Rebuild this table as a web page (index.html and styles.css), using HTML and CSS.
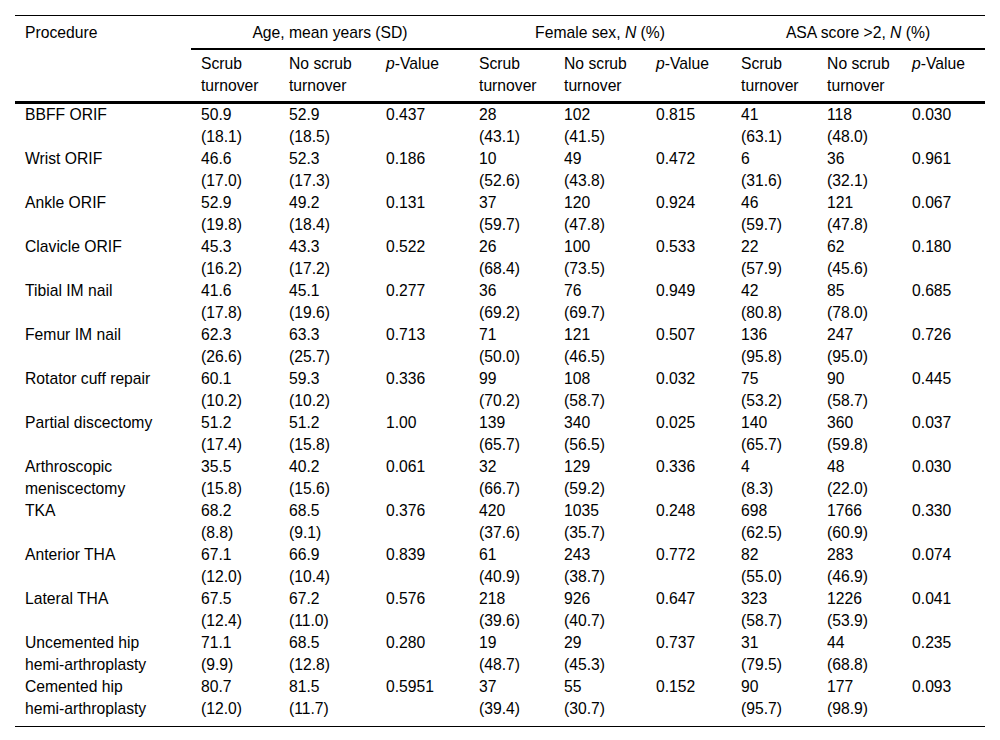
FILE: index.html
```html
<!DOCTYPE html>
<html lang="en">
<head>
<meta charset="utf-8">
<title>Table</title>
<link rel="stylesheet" href="styles.css">
</head>
<body>
<table class="data">
  <colgroup>
    <col class="c-proc">
    <col class="c1"><col class="c2"><col class="c3">
    <col class="c4"><col class="c5"><col class="c6">
    <col class="c7"><col class="c8"><col class="c9">
  </colgroup>
  <thead>
    <tr class="hr1">
      <th rowspan="2" class="proc">Procedure</th>
      <th colspan="3" class="grp">Age, mean years (SD)</th>
      <th colspan="3" class="grp">Female sex, <i>N</i> (%)</th>
      <th colspan="3" class="grp">ASA score &gt;2, <i>N</i> (%)</th>
    </tr>
    <tr class="hr2">
      <th>Scrub turnover</th><th>No scrub turnover</th><th><i>p</i>-Value</th>
      <th>Scrub turnover</th><th>No scrub turnover</th><th><i>p</i>-Value</th>
      <th>Scrub turnover</th><th>No scrub turnover</th><th><i>p</i>-Value</th>
    </tr>
  </thead>
  <tbody>
    <tr><td>BBFF ORIF</td><td>50.9<br>(18.1)</td><td>52.9<br>(18.5)</td><td>0.437</td><td>28<br>(43.1)</td><td>102<br>(41.5)</td><td>0.815</td><td>41<br>(63.1)</td><td>118<br>(48.0)</td><td>0.030</td></tr>
    <tr><td>Wrist ORIF</td><td>46.6<br>(17.0)</td><td>52.3<br>(17.3)</td><td>0.186</td><td>10<br>(52.6)</td><td>49<br>(43.8)</td><td>0.472</td><td>6<br>(31.6)</td><td>36<br>(32.1)</td><td>0.961</td></tr>
    <tr><td>Ankle ORIF</td><td>52.9<br>(19.8)</td><td>49.2<br>(18.4)</td><td>0.131</td><td>37<br>(59.7)</td><td>120<br>(47.8)</td><td>0.924</td><td>46<br>(59.7)</td><td>121<br>(47.8)</td><td>0.067</td></tr>
    <tr><td>Clavicle ORIF</td><td>45.3<br>(16.2)</td><td>43.3<br>(17.2)</td><td>0.522</td><td>26<br>(68.4)</td><td>100<br>(73.5)</td><td>0.533</td><td>22<br>(57.9)</td><td>62<br>(45.6)</td><td>0.180</td></tr>
    <tr><td>Tibial IM nail</td><td>41.6<br>(17.8)</td><td>45.1<br>(19.6)</td><td>0.277</td><td>36<br>(69.2)</td><td>76<br>(69.7)</td><td>0.949</td><td>42<br>(80.8)</td><td>85<br>(78.0)</td><td>0.685</td></tr>
    <tr><td>Femur IM nail</td><td>62.3<br>(26.6)</td><td>63.3<br>(25.7)</td><td>0.713</td><td>71<br>(50.0)</td><td>121<br>(46.5)</td><td>0.507</td><td>136<br>(95.8)</td><td>247<br>(95.0)</td><td>0.726</td></tr>
    <tr><td>Rotator cuff repair</td><td>60.1<br>(10.2)</td><td>59.3<br>(10.2)</td><td>0.336</td><td>99<br>(70.2)</td><td>108<br>(58.7)</td><td>0.032</td><td>75<br>(53.2)</td><td>90<br>(58.7)</td><td>0.445</td></tr>
    <tr><td>Partial discectomy</td><td>51.2<br>(17.4)</td><td>51.2<br>(15.8)</td><td>1.00</td><td>139<br>(65.7)</td><td>340<br>(56.5)</td><td>0.025</td><td>140<br>(65.7)</td><td>360<br>(59.8)</td><td>0.037</td></tr>
    <tr><td>Arthroscopic<br>meniscectomy</td><td>35.5<br>(15.8)</td><td>40.2<br>(15.6)</td><td>0.061</td><td>32<br>(66.7)</td><td>129<br>(59.2)</td><td>0.336</td><td>4<br>(8.3)</td><td>48<br>(22.0)</td><td>0.030</td></tr>
    <tr><td>TKA</td><td>68.2<br>(8.8)</td><td>68.5<br>(9.1)</td><td>0.376</td><td>420<br>(37.6)</td><td>1035<br>(35.7)</td><td>0.248</td><td>698<br>(62.5)</td><td>1766<br>(60.9)</td><td>0.330</td></tr>
    <tr><td>Anterior THA</td><td>67.1<br>(12.0)</td><td>66.9<br>(10.4)</td><td>0.839</td><td>61<br>(40.9)</td><td>243<br>(38.7)</td><td>0.772</td><td>82<br>(55.0)</td><td>283<br>(46.9)</td><td>0.074</td></tr>
    <tr><td>Lateral THA</td><td>67.5<br>(12.4)</td><td>67.2<br>(11.0)</td><td>0.576</td><td>218<br>(39.6)</td><td>926<br>(40.7)</td><td>0.647</td><td>323<br>(58.7)</td><td>1226<br>(53.9)</td><td>0.041</td></tr>
    <tr><td>Uncemented hip<br>hemi-arthroplasty</td><td>71.1<br>(9.9)</td><td>68.5<br>(12.8)</td><td>0.280</td><td>19<br>(48.7)</td><td>29<br>(45.3)</td><td>0.737</td><td>31<br>(79.5)</td><td>44<br>(68.8)</td><td>0.235</td></tr>
    <tr class="last"><td>Cemented hip<br>hemi-arthroplasty</td><td>80.7<br>(12.0)</td><td>81.5<br>(11.7)</td><td>0.5951</td><td>37<br>(39.4)</td><td>55<br>(30.7)</td><td>0.152</td><td>90<br>(95.7)</td><td>177<br>(98.9)</td><td>0.093</td></tr>
  </tbody>
</table>
</body>
</html>
```

FILE: styles.css
```css
html, body {
  margin: 0;
  padding: 0;
  background: #ffffff;
}

body {
  padding: 15px;
  font-family: "Liberation Sans", Arial, sans-serif;
  font-size: 15.7px;
  line-height: 22px;
  color: #000000;
}

.data {
  width: 970px;
  border-collapse: collapse;
  table-layout: fixed;
  border-top: 1px solid #000;
  border-bottom: 1px solid #000;
}

.c-proc { width: 176px; }
.c1 { width: 88px; }
.c2 { width: 97px; }
.c3 { width: 93px; }
.c4 { width: 85px; }
.c5 { width: 92px; }
.c6 { width: 85px; }
.c7 { width: 86px; }
.c8 { width: 85px; }
.c9 { width: 83px; }

.data th,
.data td {
  padding: 0 10px;
  text-align: left;
  vertical-align: top;
  font-weight: normal;
}

.data th i,
.data td i {
  font-style: italic;
}

.hr1 th {
  padding-top: 6px;
  padding-bottom: 4px;
}

.hr1 th.grp {
  text-align: center;
  border-bottom: 2px solid #000;
}

.hr1 th.proc {
  border-bottom: 3px solid #000;
}

.hr2 th {
  padding-top: 3px;
  padding-bottom: 4px;
  border-bottom: 3px solid #000;
}

.data tr.last td {
  padding-bottom: 6px;
}
```
